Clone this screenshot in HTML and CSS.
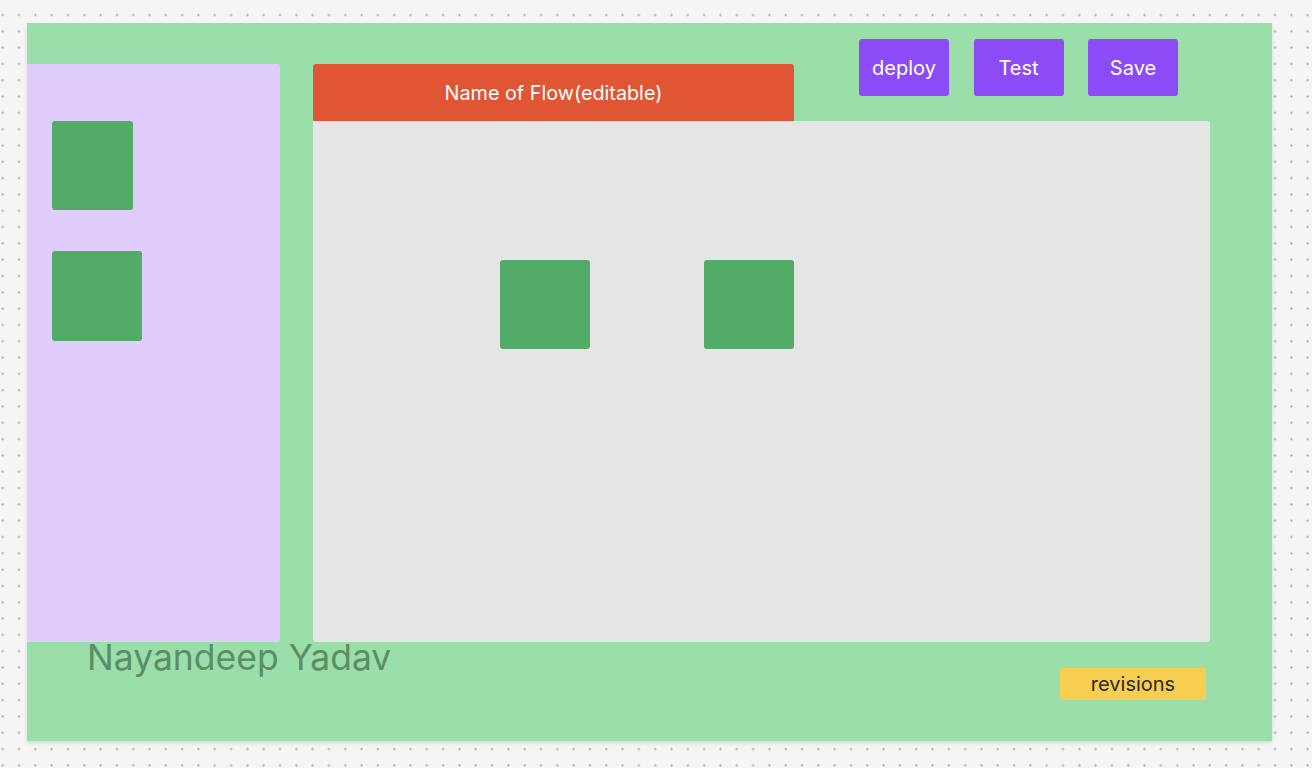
FILE: index.html
```html
<!DOCTYPE html>
<html lang="en">
<head>
<meta charset="utf-8">
<title>Flow editor</title>
<link rel="stylesheet" href="styles.css">
</head>
<body>
  <div class="frame">
    <div class="left">
      <aside class="sidebar">
        <div class="node node-a"></div>
        <div class="node node-b"></div>
      </aside>
      <div class="author">Nayandeep Yadav</div>
    </div>
    <div class="main">
      <div class="topbar">
        <div class="title">Name of Flow(editable)</div>
        <div class="actions">
          <button class="btn">deploy</button>
          <button class="btn">Test</button>
          <button class="btn">Save</button>
        </div>
      </div>
      <div class="canvas">
        <div class="node"></div>
        <div class="node"></div>
      </div>
      <div class="footer">
        <button class="revisions">revisions</button>
      </div>
    </div>
  </div>
</body>
</html>
```

FILE: styles.css
```css
* { box-sizing: border-box; }

html, body {
  margin: 0;
  padding: 0;
}

body {
  width: 1312px;
  height: 768px;
  overflow: hidden;
  font-family: Inter, "Noto Sans", "Liberation Sans", sans-serif;
  background-color: #f5f5f5;
  background-image: radial-gradient(circle, #b4b4b4 0.9px, rgba(180,180,180,0) 1.4px);
  background-size: 16.32px 16.32px;
  background-position: -5.46px 6.84px;
  padding-top: 23px;
  padding-left: 27px;
}

.frame {
  width: 1245px;
  height: 718px;
  background: #9adfa9;
  box-shadow: 0 2px 4px rgba(0, 0, 0, 0.12);
  display: flex;
}

.left {
  width: 253px;
  display: flex;
  flex-direction: column;
  padding-top: 41px;
}

.sidebar {
  height: 578px;
  background: #e0cdfb;
  border-radius: 0 3px 3px 0;
  padding: 57px 0 0 25px;
  display: flex;
  flex-direction: column;
  align-items: flex-start;
  gap: 41px;
}

.node {
  width: 90px;
  height: 89px;
  background: #52ac68;
  border-radius: 3px;
  flex: none;
}

.node-a { width: 81px; height: 89px; }
.node-b { width: 90px; height: 90px; }

.author {
  margin: -2px 0 0 60px;
  font-size: 35.5px;
  line-height: 35px;
  color: #5d8d67;
  white-space: nowrap;
}

.main {
  margin-left: 33px;
  width: 897px;
  padding-top: 16px;
  display: flex;
  flex-direction: column;
}

.topbar {
  height: 82px;
  display: flex;
}

.title {
  align-self: flex-end;
  width: 481px;
  height: 57px;
  padding-top: 1px;
  background: #e05635;
  border-radius: 3px 3px 0 0;
  color: #fff;
  font-size: 19.8px;
  display: flex;
  align-items: center;
  justify-content: center;
}

.actions {
  align-self: flex-start;
  margin-left: 65px;
  display: flex;
  gap: 24.5px;
}

.btn {
  width: 90px;
  height: 57px;
  border: 0;
  padding: 1px 0 0;
  border-radius: 3px;
  background: #8c4bf6;
  color: #fff;
  font-family: inherit;
  font-size: 20px;
}

.canvas {
  height: 521px;
  background: #e5e5e5;
  border-radius: 0 3px 3px 3px;
  padding: 139px 0 0 187px;
  display: flex;
  align-items: flex-start;
  gap: 114px;
}

.footer {
  display: flex;
  justify-content: flex-end;
  padding: 26px 4px 0 0;
}

.revisions {
  width: 146px;
  height: 32px;
  border: 0;
  padding: 0;
  border-radius: 3px;
  background: #f7ce4f;
  color: #2a2a22;
  font-family: inherit;
  font-size: 20px;
}
```
